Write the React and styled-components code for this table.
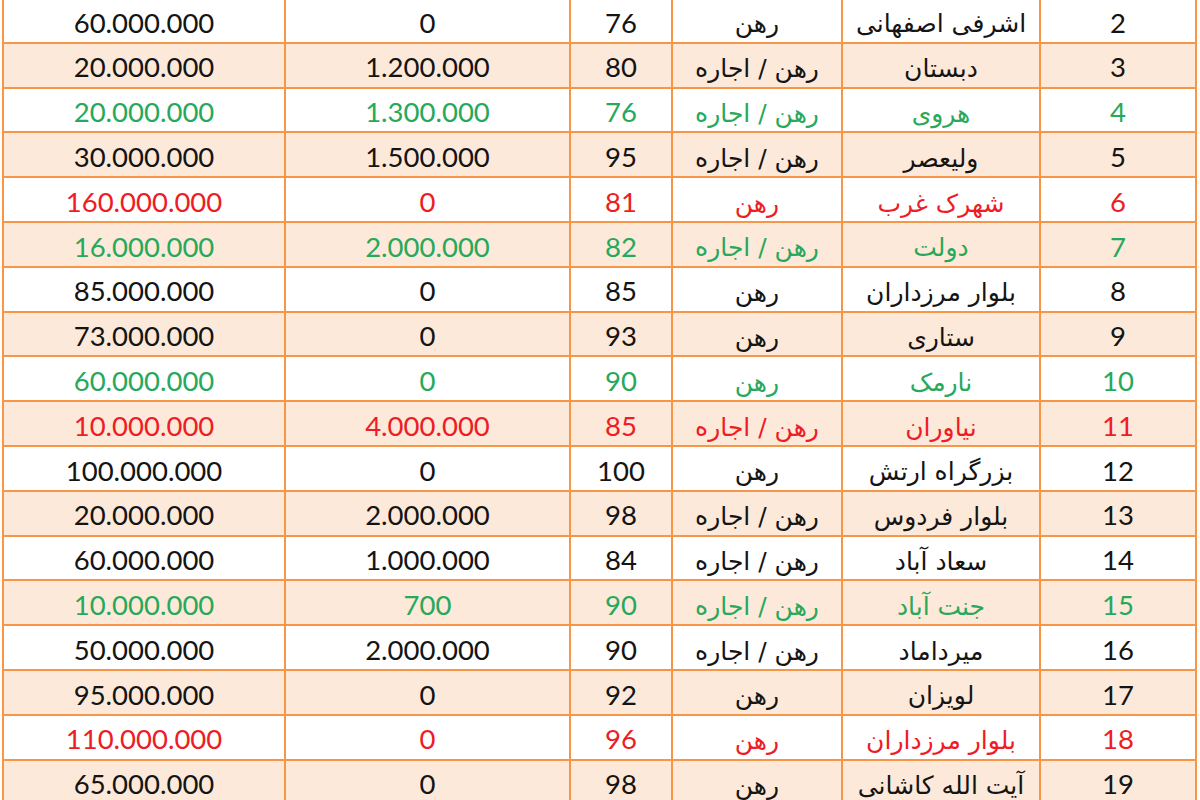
import React from 'react'
import styled, { createGlobalStyle } from 'styled-components'

const GlobalStyle = createGlobalStyle`
    html, body {
        margin: 0;
        padding: 0;
        background: #ffffff;
        overflow: hidden;
    }
`

const Page = styled.div`
    width: 1200px;
    height: 800px;
    overflow: hidden;
    padding-left: 2px;
    box-sizing: border-box;
`

const Table = styled.table`
    direction: rtl;
    margin-top: -3px;
    width: 1195px;
    table-layout: fixed;
    border-collapse: collapse;
    border: 2px solid #f79646;
`

const Row = styled.tr`
    background: ${props => props.$band ? '#fde9d9' : '#ffffff'};
`

const Cell = styled.td`
    height: 44.8px;
    padding: ${props => props.$persian ? '7px 0 0' : '4px 0 0'};
    box-sizing: border-box;
    border: 2px solid #f79646;
    text-align: center;
    vertical-align: middle;
    white-space: nowrap;
    color: ${props => props.$tone};
    font-family: ${props => props.$persian ? '"DejaVu Sans", "Noto Sans", sans-serif' : 'Lato, "Open Sans", sans-serif'};
    font-size: ${props => props.$persian ? '25px' : '27.5px'};
    line-height: 1;
`

const tones = {
    black: '#141414',
    green: '#27a85a',
    red: '#ee1c25',
}

const rows = [
    [2, 'اشرفی اصفهانی', 'رهن', '76', '0', '60.000.000', 'black'],
    [3, 'دبستان', 'رهن / اجاره', '80', '1.200.000', '20.000.000', 'black'],
    [4, 'هروی', 'رهن / اجاره', '76', '1.300.000', '20.000.000', 'green'],
    [5, 'ولیعصر', 'رهن / اجاره', '95', '1.500.000', '30.000.000', 'black'],
    [6, 'شهرک غرب', 'رهن', '81', '0', '160.000.000', 'red'],
    [7, 'دولت', 'رهن / اجاره', '82', '2.000.000', '16.000.000', 'green'],
    [8, 'بلوار مرزداران', 'رهن', '85', '0', '85.000.000', 'black'],
    [9, 'ستاری', 'رهن', '93', '0', '73.000.000', 'black'],
    [10, 'نارمک', 'رهن', '90', '0', '60.000.000', 'green'],
    [11, 'نیاوران', 'رهن / اجاره', '85', '4.000.000', '10.000.000', 'red'],
    [12, 'بزرگراه ارتش', 'رهن', '100', '0', '100.000.000', 'black'],
    [13, 'بلوار فردوس', 'رهن / اجاره', '98', '2.000.000', '20.000.000', 'black'],
    [14, 'سعاد آباد', 'رهن / اجاره', '84', '1.000.000', '60.000.000', 'black'],
    [15, 'جنت آباد', 'رهن / اجاره', '90', '700', '10.000.000', 'green'],
    [16, 'میرداماد', 'رهن / اجاره', '90', '2.000.000', '50.000.000', 'black'],
    [17, 'لویزان', 'رهن', '92', '0', '95.000.000', 'black'],
    [18, 'بلوار مرزداران', 'رهن', '96', '0', '110.000.000', 'red'],
    [19, 'آیت الله کاشانی', 'رهن', '98', '0', '65.000.000', 'black'],
]

// column widths, right to left (number, name, type, area, rent, deposit)
const widths = [156, 198, 170, 102, 285, 282]

function App() {
    return (
        <>
        <GlobalStyle />
        <Page>
            <Table>
                <colgroup>
                    {widths.map((w, i) => <col key={i} style={{ width: w }} />)}
                </colgroup>
                <tbody>
                    {rows.map(([num, name, kind, area, rent, deposit, color]) => {
                        const tone = tones[color]
                        return (
                            <Row key={num} $band={num % 2 === 1}>
                                <Cell $tone={tone}>{num}</Cell>
                                <Cell $tone={tone} $persian>{name}</Cell>
                                <Cell $tone={tone} $persian>{kind}</Cell>
                                <Cell $tone={tone}>{area}</Cell>
                                <Cell $tone={tone}>{rent}</Cell>
                                <Cell $tone={tone}>{deposit}</Cell>
                            </Row>
                        )
                    })}
                </tbody>
            </Table>
        </Page>
        </>
    )
}

export default App
